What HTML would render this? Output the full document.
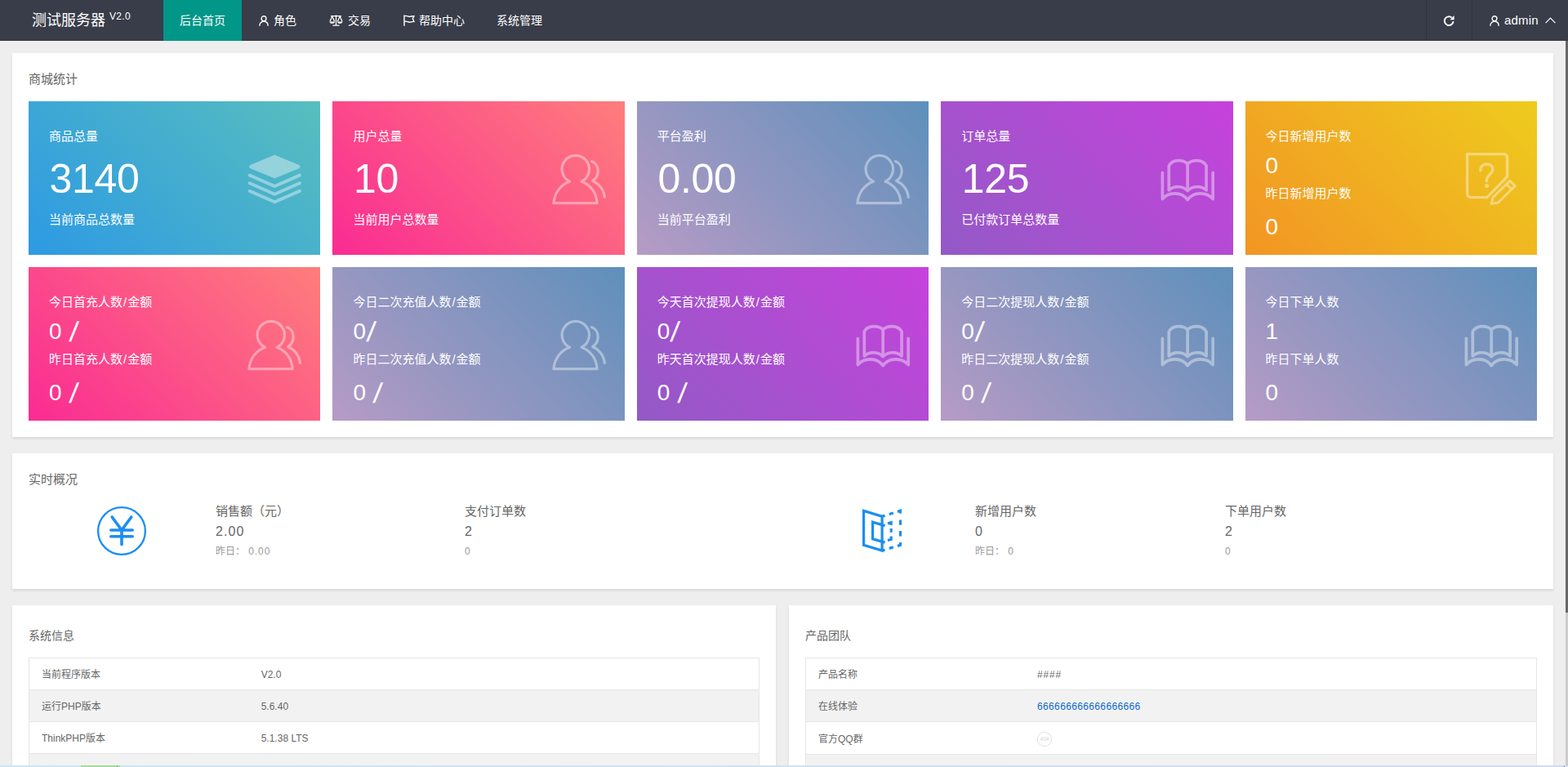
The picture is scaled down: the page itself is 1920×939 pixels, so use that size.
<!DOCTYPE html>
<html lang="zh-CN">
<head>
<meta charset="utf-8">
<title>测试服务器</title>
<style>
*{box-sizing:border-box;margin:0;padding:0}
html,body{width:1920px;height:939px;overflow:hidden}
body{position:relative;background:#eeeeee;font-family:"Liberation Sans","Noto Sans CJK SC",sans-serif;font-size:14px;color:#666;line-height:24px}
ul{list-style:none}
a{text-decoration:none;color:inherit}
svg{display:block}
/* ---------- header ---------- */
.header{position:absolute;left:0;top:0;width:1920px;height:50px;background:#393d49;color:#fff;z-index:5}
.logo{position:absolute;left:0;top:0;width:200px;height:50px;line-height:50px;padding-left:39px;font-size:18px;white-space:nowrap}
.logo sup{font-size:12px;position:relative;top:-7px;left:0;vertical-align:baseline;letter-spacing:.3px}
.nav{position:absolute;left:200px;top:0;height:50px;display:flex}
.nav li{height:50px;line-height:50px;padding:0 20px;font-size:14px;white-space:nowrap;display:flex;align-items:center}
.nav li.on{background:#009688}
.nav li svg{margin-right:6px}
.nav li.i2{padding-left:21px}
.nav li.i4 svg{margin-right:5px}
.nav li.i5{padding-left:19px}
.nav-right{position:absolute;right:0;top:0;height:50px;display:flex}
.nav-right li{height:50px;display:flex;align-items:center;border-left:1px solid #30343f}
.nav-right li.refresh{width:56px;justify-content:center}
.nav-right li.user{width:118px;padding-left:21px;font-size:15px;letter-spacing:.2px}
.nav-right li.user .uicon{margin-right:6px}
.nav-right li.user .caret{margin-left:8px}
/* ---------- scroll / bottom strip ---------- */
.scroll{position:absolute;right:0;top:50px;width:3px;height:887px;background:#cccccc}
.scroll i{display:block;width:3px;height:700px;background:#666666}
.strip{position:absolute;left:0;top:937px;width:1920px;height:2px;background:linear-gradient(90deg,#cfe6f0,#d3dcec)}
.strip i{position:absolute;left:99px;top:0;width:48px;height:2px;background:#a4dba0}
.strip u{position:absolute;top:0;width:1px;height:2px;background:#7fae86}
.strip u+u{background:#9aa2b8}
/* ---------- main ---------- */
.main{position:absolute;left:0;top:50px;width:1917px;height:887px;overflow:hidden;padding:15px}
.card{background:#fff;box-shadow:0 2px 3px 0 rgba(0,0,0,.1);padding:20px}
.card h3{font-weight:normal;font-size:15px;line-height:24px;height:24px;color:#666}
.c1{height:470px}
.c2{height:166px;margin-top:20px}
.row2{display:flex;margin-top:20px;gap:16px}
.row2 .card{flex:0 0 auto;height:300px}
.c3{width:935px}.c4{width:936px}
.c3 h3,.c4 h3{font-size:14px;margin-top:5px}
/* stat tiles */
.tiles{display:grid;grid-template-columns:repeat(5,1fr);gap:15px;margin-top:15px}
.tile{position:relative;height:188px;color:#fff;padding:0 25px;overflow:hidden}
.tile .ico{position:absolute;right:20px;top:58px;width:72px;height:72px;opacity:.4}
.tile p{font-size:15px;line-height:24px;height:24px;white-space:nowrap}
.tile b{display:block;font-weight:normal;white-space:nowrap}
.t-a p.l1{margin-top:31px}
.t-a b{font-size:50px;line-height:60px;height:60px;margin-top:10px;letter-spacing:-.3px;text-indent:.6px}
.t-a p.l2{margin-top:8px}
.t-b p.l1{margin-top:31px}
.t-b b{font-size:28px;line-height:36px;height:36px;margin-top:6px}
.t-b p.l2{margin-top:4px}
.t-b b.n2{margin-top:11px}
.t-b b{word-spacing:.6px}
.tile b .sl{display:inline-block;font-size:34px;line-height:0;transform-origin:50% 50%;transform:translate(1.8px,3px) skewX(-7deg) scaleX(1.04)}
.tile p i{font-style:normal;padding:0 1px}
.g-blue{background:linear-gradient(45deg,#2d9ae3,#58bebe)}
.g-pink{background:linear-gradient(45deg,#fa2b93,#fe7e7c)}
.g-lav{background:linear-gradient(45deg,#b69bc5,#5e90bb)}
.g-pur{background:linear-gradient(45deg,#935ac6,#c642dc)}
.g-org{background:linear-gradient(45deg,#f29524,#eecb1e)}
/* realtime */
.rt{position:relative;height:101px}
.rt .it{position:absolute;top:0}
.rt .it .t{font-size:15px;line-height:24px;color:#666;margin-top:15px}
.rt .it .v{font-size:16px;line-height:24px;color:#666;margin-top:1px;letter-spacing:1.1px}
.rt .it .y{font-size:12px;line-height:24px;color:#999;margin-top:0;letter-spacing:.9px}
.rt .it .y em{font-style:normal;letter-spacing:0}
.rt .ic{position:absolute}
/* tables */
table{border-collapse:collapse;width:100%;margin-top:15px;font-size:12px;color:#666}
table{border:1px solid #e6e6e6}
td{border-bottom:1px solid #e6e6e6;height:39px;padding:10px 15px 8px;line-height:20px}
td+td{padding-left:16px}
tr:nth-child(n+4) td{padding-top:14px;padding-bottom:4px}
tr:nth-child(even) td{background:#f2f2f2}
td:first-child{width:30%}
td a{color:#0868cc;letter-spacing:.36px}
.c4 td+td{padding-left:15px}
.c4 tr:first-child td+td{letter-spacing:.8px}
.e404{margin:0 0 0 -1px;position:relative;top:0}
.c4 tr:nth-child(3) td{height:40px}
</style>
</head>
<body>
<div class="header">
  <div class="logo">测试服务器 <sup>V2.0</sup></div>
  <ul class="nav">
    <li class="on">后台首页</li>
    <li class="i2"><svg width="12" height="13" viewBox="0 0 12 13" fill="none" stroke="#fff" stroke-width="1.4"><circle cx="6" cy="3.7" r="2.9"/><path d="M0.8 12.8c0-3.500 2.200-5.600 5.200-5.600s5.200 2.100 5.200 5.600"/></svg>角色</li>
    <li><svg width="17" height="14" viewBox="0 0 17 14" fill="none" stroke="#fff" stroke-width="1.3"><path d="M2 1.6h13M8.5 0.6v12.4M4.5 13.2h8M3.8 2L1 8.2M3.8 2l2.8 6.2M13.2 2l-2.8 6.2M13.2 2L16 8.2"/><path d="M0.6 8.4h6.4c0 1.6-1.4 2.4-3.2 2.4s-3.2-.8-3.2-2.4zM10 8.4h6.4c0 1.6-1.4 2.4-3.2 2.4s-3.2-.8-3.2-2.4z" fill="#fff" stroke="none"/></svg>交易</li>
    <li class="i4"><svg width="14" height="14" viewBox="0 0 14 14" fill="none" stroke="#fff" stroke-width="1.4"><path d="M1 0.5v13.2M1.6 1.6c2.5-1 4 1 6 .8s3-.9 5.4-.8l-1.6 3.4 1.6 3.4c-2.400-.1-3.400.6-5.400.8s-3.500-1.800-6-.8"/></svg>帮助中心</li>
    <li class="i5">系统管理</li>
  </ul>
  <ul class="nav-right">
    <li class="refresh"><svg width="15" height="15" viewBox="0 0 15 15" fill="none" stroke="#fff" stroke-width="1.9"><path d="M12.6 8.2a5.400 5.400 0 1 1-1.900-4.700"/><path d="M13.6 1v5.200h-5.200z" fill="#fff" stroke="none"/></svg></li>
    <li class="user"><svg class="uicon" width="12" height="13" viewBox="0 0 12 13" fill="none" stroke="#fff" stroke-width="1.4"><circle cx="6" cy="3.7" r="2.9"/><path d="M0.8 12.8c0-3.500 2.200-5.600 5.200-5.600s5.200 2.100 5.200 5.600"/></svg>admin<svg class="caret" width="13" height="8" viewBox="0 0 13 8" fill="none" stroke="#fff" stroke-width="1.2"><path d="M0.6 7.200L6.5 1.200l5.900 6"/></svg></li>
  </ul>
</div>

<div class="main">
  <div class="card c1">
    <h3>商城统计</h3>
    <div class="tiles">
      <div class="tile t-a g-blue"><svg class="ico" viewBox="0 0 72 72" fill="none" stroke="#fff" stroke-linecap="round" stroke-linejoin="round"><path d="M36.300 10L65.200 22.100 36.300 33.800 7.400 22.100z" fill="#fff" stroke-width="4.600"/><path d="M5.700 32.600L36.300 46l30.600-13.400M5.700 42.300L36.300 55.700l30.600-13.400M5.700 51.900L36.300 65.300l30.600-13.400" stroke-width="3.900"/></svg><p class="l1">商品总量</p><b>3140</b><p class="l2">当前商品总数量</p></div>
      <div class="tile t-a g-pink"><svg class="ico" viewBox="0 0 72 72" fill="none" stroke="#fff" stroke-width="3.200" stroke-linecap="round" stroke-linejoin="round"><path d="M24.600 40.200A16.700 16.700 0 1 1 39 40.200C50 44 57.500 54 58.100 66.700H4.900C6 54 13.600 44 24.600 40.200z"/><path d="M51.500 15.600C56.500 17.500 59.300 22.500 59.200 27.600 59.100 32.600 56.500 37 52.600 39.600 60 42.500 66.500 50 67.300 59.400"/></svg><p class="l1">用户总量</p><b>10</b><p class="l2">当前用户总数量</p></div>
      <div class="tile t-a g-lav"><svg class="ico" viewBox="0 0 72 72" fill="none" stroke="#fff" stroke-width="3.200" stroke-linecap="round" stroke-linejoin="round"><path d="M24.600 40.200A16.700 16.700 0 1 1 39 40.200C50 44 57.500 54 58.100 66.700H4.900C6 54 13.600 44 24.600 40.200z"/><path d="M51.500 15.600C56.500 17.500 59.300 22.500 59.200 27.600 59.100 32.600 56.500 37 52.600 39.600 60 42.500 66.500 50 67.300 59.400"/></svg><p class="l1">平台盈利</p><b>0.00</b><p class="l2">当前平台盈利</p></div>
      <div class="tile t-a g-pur"><svg class="ico" viewBox="0 0 72 72" fill="none" stroke="#fff" stroke-width="3.700" stroke-linecap="round" stroke-linejoin="round"><path d="M5.400 29.400V61.600C13 52.500 29 52.500 36.200 62.600 43.400 52.500 59.400 52.500 67.200 61.600V29.400"/><path d="M13.300 50.800V21C17 13.500 30 12.500 36.200 18.600 42.400 12.500 55.400 13.500 59.100 21V50.800C53.400 45.500 42.400 45 36.200 51.500 30 45 19 45.500 13.300 50.800zM36.200 18.600V51.500"/></svg><p class="l1">订单总量</p><b>125</b><p class="l2">已付款订单总数量</p></div>
      <div class="tile t-b g-org"><svg class="ico" viewBox="0 0 72 72" fill="none" stroke="#fff" stroke-width="3.400" stroke-linejoin="round"><path d="M30.900 59.600H11.400Q6.600 59.600 6.600 54.800V6.600H50.800Q55.600 6.600 55.600 11.400V34.300z"/><path d="M22.800 26.800C22.600 21.500 26 19 30.500 19 35 19 38 21.500 38 25.300 38 30.500 30.300 32 30.300 39.800" stroke-linecap="round"/><circle cx="30.800" cy="45.500" r="2.600" fill="#fff" stroke="none"/><path d="M58.900 39.400L65.100 45.600 44.600 66 36.200 67.500 38 59.600zM54.800 43.500L61 49.700" stroke-width="3"/></svg><p class="l1">今日新增用户数</p><b>0</b><p class="l2">昨日新增用户数</p><b class="n2">0</b></div>
      <div class="tile t-b g-pink"><svg class="ico" viewBox="0 0 72 72" fill="none" stroke="#fff" stroke-width="3.200" stroke-linecap="round" stroke-linejoin="round"><path d="M24.600 40.200A16.700 16.700 0 1 1 39 40.200C50 44 57.500 54 58.100 66.700H4.900C6 54 13.600 44 24.600 40.200z"/><path d="M51.500 15.600C56.500 17.500 59.300 22.500 59.200 27.600 59.100 32.600 56.500 37 52.600 39.600 60 42.500 66.500 50 67.300 59.400"/></svg><p class="l1">今日首充人数<i>/</i>金额</p><b>0 <span class="sl">/</span></b><p class="l2">昨日首充人数<i>/</i>金额</p><b class="n2">0 <span class="sl">/</span></b></div>
      <div class="tile t-b g-lav"><svg class="ico" viewBox="0 0 72 72" fill="none" stroke="#fff" stroke-width="3.200" stroke-linecap="round" stroke-linejoin="round"><path d="M24.600 40.200A16.700 16.700 0 1 1 39 40.200C50 44 57.500 54 58.100 66.700H4.900C6 54 13.600 44 24.600 40.200z"/><path d="M51.500 15.600C56.500 17.500 59.300 22.500 59.200 27.600 59.100 32.600 56.500 37 52.600 39.600 60 42.500 66.500 50 67.300 59.400"/></svg><p class="l1">今日二次充值人数<i>/</i>金额</p><b>0<span class="sl">/</span></b><p class="l2">昨日二次充值人数<i>/</i>金额</p><b class="n2">0 <span class="sl">/</span></b></div>
      <div class="tile t-b g-pur"><svg class="ico" viewBox="0 0 72 72" fill="none" stroke="#fff" stroke-width="3.700" stroke-linecap="round" stroke-linejoin="round"><path d="M5.400 29.400V61.600C13 52.500 29 52.500 36.200 62.600 43.400 52.500 59.400 52.500 67.200 61.600V29.400"/><path d="M13.300 50.800V21C17 13.500 30 12.500 36.200 18.600 42.400 12.500 55.400 13.500 59.100 21V50.800C53.400 45.500 42.400 45 36.200 51.500 30 45 19 45.500 13.300 50.800zM36.200 18.600V51.500"/></svg><p class="l1">今天首次提现人数<i>/</i>金额</p><b>0<span class="sl">/</span></b><p class="l2">昨天首次提现人数<i>/</i>金额</p><b class="n2">0 <span class="sl">/</span></b></div>
      <div class="tile t-b g-lav"><svg class="ico" viewBox="0 0 72 72" fill="none" stroke="#fff" stroke-width="3.700" stroke-linecap="round" stroke-linejoin="round"><path d="M5.400 29.400V61.600C13 52.500 29 52.500 36.200 62.600 43.400 52.500 59.400 52.500 67.200 61.600V29.400"/><path d="M13.300 50.800V21C17 13.500 30 12.500 36.200 18.600 42.400 12.500 55.400 13.500 59.100 21V50.800C53.400 45.500 42.400 45 36.200 51.500 30 45 19 45.500 13.300 50.800zM36.200 18.600V51.500"/></svg><p class="l1">今日二次提现人数<i>/</i>金额</p><b>0<span class="sl">/</span></b><p class="l2">昨日二次提现人数<i>/</i>金额</p><b class="n2">0 <span class="sl">/</span></b></div>
      <div class="tile t-b g-lav"><svg class="ico" viewBox="0 0 72 72" fill="none" stroke="#fff" stroke-width="3.700" stroke-linecap="round" stroke-linejoin="round"><path d="M5.400 29.400V61.600C13 52.500 29 52.500 36.200 62.600 43.400 52.500 59.400 52.500 67.200 61.600V29.400"/><path d="M13.300 50.800V21C17 13.500 30 12.500 36.200 18.600 42.400 12.500 55.400 13.500 59.100 21V50.800C53.400 45.500 42.400 45 36.200 51.500 30 45 19 45.500 13.300 50.800zM36.200 18.600V51.500"/></svg><p class="l1">今日下单人数</p><b>1</b><p class="l2">昨日下单人数</p><b class="n2">0</b></div>
    </div>
  </div>

  <div class="card c2">
    <h3>实时概况</h3>
    <div class="rt">
      <svg class="ic" style="left:82px;top:19px" width="64" height="64" viewBox="0 0 64 64" fill="none" stroke="#1b8ef2" stroke-linecap="round"><circle cx="32" cy="32" r="28.900" stroke-width="2.300"/><path d="M20.200 15L32 31 43.800 15M18.800 31h26.400M18.800 38.800h26.400M32 31v17.600" stroke-width="3.600" stroke-linejoin="round"/></svg>
      <svg class="ic" style="left:1017px;top:20px" width="56" height="62" viewBox="0 0 56 62" fill="none" stroke="#1b8ef2" stroke-width="3.200"><path d="M5.600 6.400L28.100 13.200V55L5.600 48.300z"/><path d="M31.600 24.600L16.600 20.200V40.700L31.600 45.100"/><path d="M28.100 13.200L31.600 12.100M28.100 55L31.600 54"/><path d="M36.800 10.500L41.900 9M47 7.400L50.500 6.300V9.500M50.500 17.400V23.800M50.500 31V37.400M50.500 45.100V48.400L47 49.400M41.900 50.900L36.800 52.400"/><path d="M35 21.900L39.200 20.600V24M39.200 28.100V32.800M39.200 37.600V41.200L35 42.500"/></svg>
      <div class="it" style="left:229px"><div class="t">销售额（元）</div><div class="v">2.00</div><div class="y"><em>昨日：</em> 0.00</div></div>
      <div class="it" style="left:534px"><div class="t">支付订单数</div><div class="v">2</div><div class="y">0</div></div>
      <div class="it" style="left:1159px"><div class="t">新增用户数</div><div class="v">0</div><div class="y"><em>昨日：</em> 0</div></div>
      <div class="it" style="left:1465px"><div class="t">下单用户数</div><div class="v">2</div><div class="y">0</div></div>
    </div>
  </div>

  <div class="row2">
    <div class="card c3">
      <h3>系统信息</h3>
      <table>
        <tr><td>当前程序版本</td><td>V2.0</td></tr>
        <tr><td>运行PHP版本</td><td>5.6.40</td></tr>
        <tr><td>ThinkPHP版本</td><td>5.1.38 LTS</td></tr>
        <tr><td>MySQL版本</td><td>5.6.50</td></tr>
        <tr><td>服务器信息</td><td>Linux</td></tr>
      </table>
    </div>
    <div class="card c4">
      <h3>产品团队</h3>
      <table>
        <tr><td>产品名称</td><td>####</td></tr>
        <tr><td>在线体验</td><td><a>666666666666666666</a></td></tr>
        <tr><td>官方QQ群</td><td><svg class="e404" width="20" height="20" viewBox="0 0 20 20"><circle cx="10" cy="10" r="8.600" fill="none" stroke="#e4dfdf" stroke-width="1"/><text x="10" y="12.300" text-anchor="middle" font-size="6.500" fill="#d9d2d2" font-family="Liberation Sans, sans-serif">404</text></svg></td></tr>
        <tr><td>项目地址</td><td>####</td></tr>
        <tr><td>联系我们</td><td>####</td></tr>
      </table>
    </div>
  </div>
</div>
<div class="scroll"><i></i></div>
<div class="strip"><i></i><u style="left:143px"></u><u style="left:1915px"></u></div>
</body>
</html>
